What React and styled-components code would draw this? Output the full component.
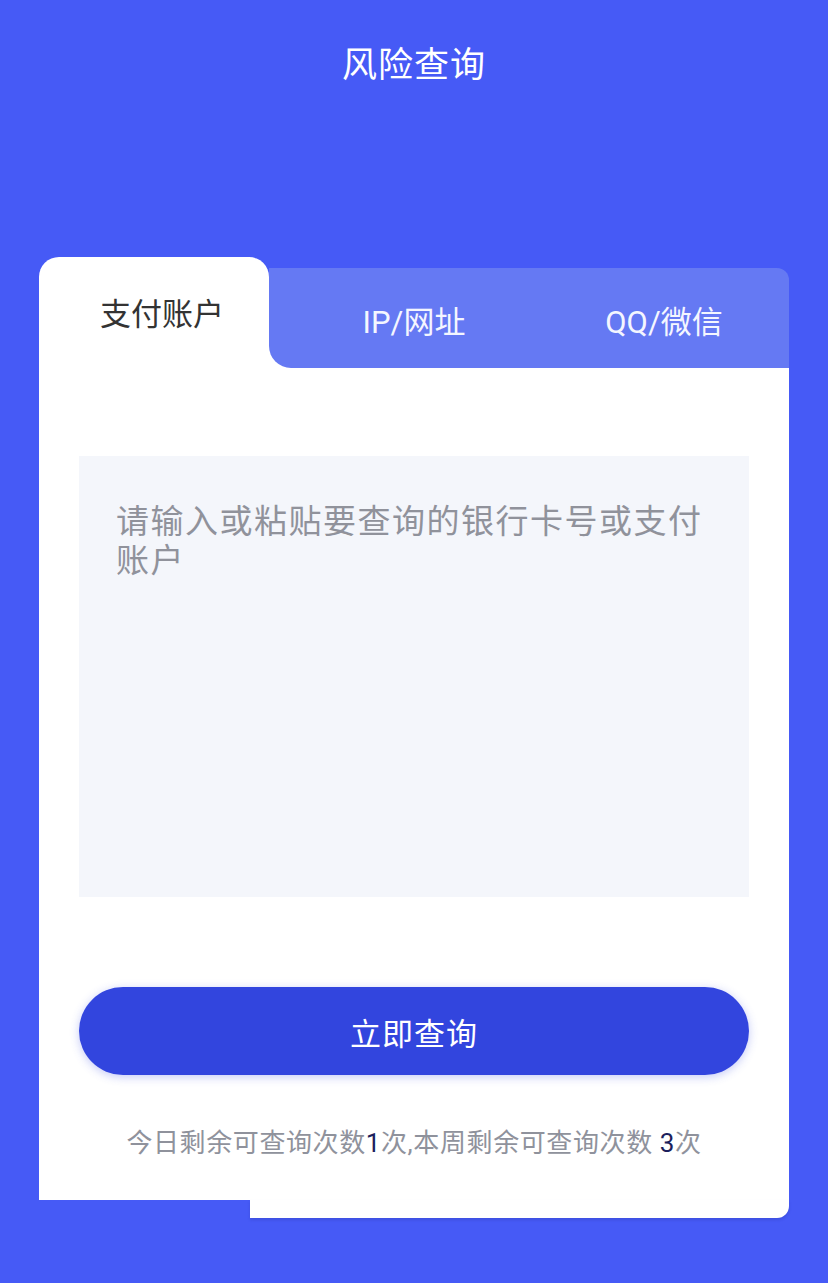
import React from "react";
import styled, { createGlobalStyle } from "styled-components";

const FONT = `Roboto, "Noto Sans CJK SC", "Noto Sans", sans-serif`;

const GlobalStyle = createGlobalStyle`
  html, body {
    margin: 0;
    padding: 0;
    background: #465af6;
  }
  * { box-sizing: border-box; }
  body {
    font-family: ${FONT};
  }
`;

const Page = styled.div`
  min-height: 1283px;
  background: #465af6;
  padding: 0 39px;
  display: flex;
  flex-direction: column;
`;

const Header = styled.header`
  height: 122px;
  display: flex;
  align-items: center;
  justify-content: center;
`;

const Title = styled.h1`
  margin: 0;
  font-size: 35px;
  font-weight: 400;
  color: #ffffff;
  letter-spacing: 1px;
`;

const Card = styled.section`
  margin-top: 135px;
  width: 750px;
  display: flex;
  flex-direction: column;
`;

const TabRow = styled.div`
  display: flex;
  height: 111px;
`;

const ActiveTab = styled.div`
  width: 230px;
  flex: none;
  background: #ffffff;
  border-radius: 20px 20px 0 0;
  display: flex;
  align-items: center;
  justify-content: center;
  padding-left: 16px;
  padding-bottom: 2px;
  font-size: 31px;
  color: #333333;
`;

const BarWrap = styled.div`
  flex: 1;
  padding-top: 11px;
  background: linear-gradient(to bottom, transparent 50%, #ffffff 50%);
`;

const TabBar = styled.div`
  height: 100px;
  background: #6579f3;
  border-radius: 0 12px 0 22px;
  display: flex;
  padding-left: 20px;
`;

const Tab = styled.div`
  width: 250px;
  display: flex;
  align-items: center;
  justify-content: center;
  padding-top: 2px;
  font-size: 31px;
  color: #f4f6ff;
`;

const Body = styled.div`
  background: #ffffff;
  height: 832px;
  padding: 88px 40px 0;
  display: flex;
  flex-direction: column;
`;

const Input = styled.textarea`
  display: block;
  width: 100%;
  height: 441px;
  border: none;
  outline: none;
  resize: none;
  background: #f4f6fb;
  padding: 46px 37px;
  font-family: ${FONT};
  font-size: 33px;
  line-height: 39px;
  letter-spacing: 1.5px;
  color: #333;
  &::placeholder {
    color: #90929b;
    opacity: 1;
  }
`;

const SubmitButton = styled.button`
  margin-top: 90px;
  height: 88px;
  width: 100%;
  border: none;
  border-radius: 44px;
  background: #3245de;
  box-shadow: 0 2px 10px rgba(60, 80, 230, 0.3);
  color: #ffffff;
  font-family: ${FONT};
  font-size: 31px;
  letter-spacing: 1px;
  cursor: pointer;
`;

const Quota = styled.p`
  margin: 50px 0 0;
  text-align: center;
  font-size: 26px;
  line-height: 36px;
  letter-spacing: 0.6px;
  color: #8f929c;
`;

const Count = styled.span`
  color: #1c1f5c;
`;

const Tail = styled.div`
  margin-left: 211px;
  height: 18px;
  background: #ffffff;
  border-bottom-right-radius: 12px;
  box-shadow: 0 2px 3px rgba(30, 40, 140, 0.2);
`;

export default function App() {
  return (
    <>
      <GlobalStyle />
      <Page>
        <Header>
          <Title>风险查询</Title>
        </Header>
        <Card>
          <TabRow>
            <ActiveTab>支付账户</ActiveTab>
            <BarWrap>
              <TabBar>
                <Tab>IP/网址</Tab>
                <Tab>QQ/微信</Tab>
              </TabBar>
            </BarWrap>
          </TabRow>
          <Body>
            <Input placeholder="请输入或粘贴要查询的银行卡号或支付账户" />
            <SubmitButton type="button">立即查询</SubmitButton>
            <Quota>
              今日剩余可查询次数<Count>1</Count>次,本周剩余可查询次数 <Count>3</Count>次
            </Quota>
          </Body>
          <Tail />
        </Card>
      </Page>
    </>
  );
}
